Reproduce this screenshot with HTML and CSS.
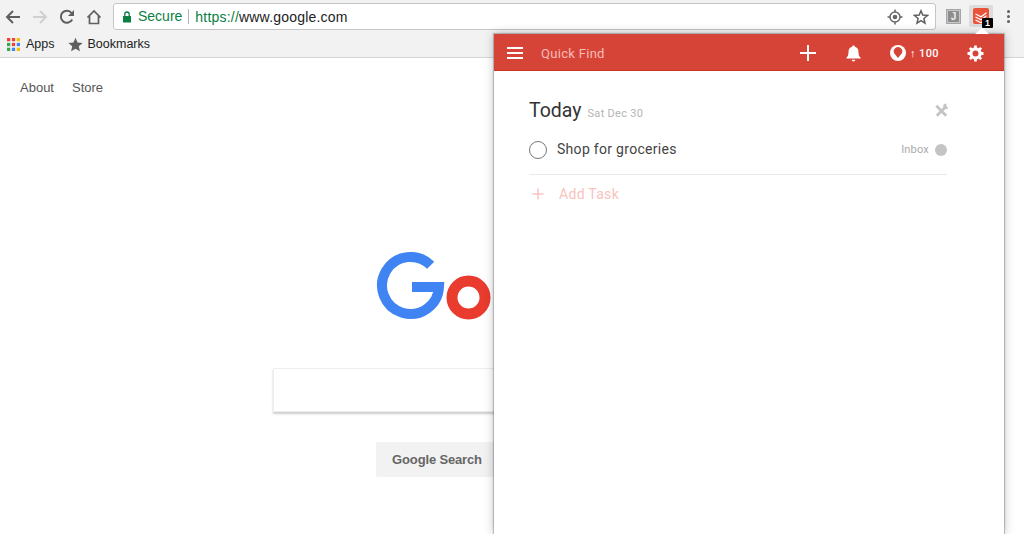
FILE: index.html
```html
<!DOCTYPE html>
<html lang="en">

<head>
    <meta charset="UTF-8">
    <title>Google</title>
    <link rel="stylesheet" href="styles.css">
</head>

<body>
    <header class="browser">
        <div class="toolbar">
            <button class="nav-btn">
                <svg viewBox="0 0 16 16" width="16" height="16"><path d="M15 8H2.500M8 2 2 8l6 6" fill="none" stroke="#5f5f5f" stroke-width="2"/></svg>
            </button>
            <button class="nav-btn">
                <svg viewBox="0 0 16 16" width="16" height="16"><path d="M1 8h12.500M8 2l6 6-6 6" fill="none" stroke="#d0d0d0" stroke-width="2"/></svg>
            </button>
            <button class="nav-btn">
                <svg viewBox="0 0 16 16" width="16" height="16"><path d="M13.200 10.500A6 6 0 1 1 12.600 4" fill="none" stroke="#5f5f5f" stroke-width="2"/><path d="M15 1v6H9z" fill="#5f5f5f"/></svg>
            </button>
            <button class="nav-btn">
                <svg viewBox="0 0 16 16" width="16" height="16"><path d="M1.500 8.500 8 2l6.500 6.500M3.500 7v7.500h9V7" fill="none" stroke="#5f5f5f" stroke-width="1.700"/></svg>
            </button>
            <div class="omnibox">
                <svg class="lock" viewBox="0 0 10 12" width="10" height="12"><path d="M1 5h8v6.500H1z" fill="#0b8043"/><path d="M2.800 5V3.200a2.200 2.200 0 0 1 4.400 0V5" fill="none" stroke="#0b8043" stroke-width="1.300"/></svg>
                <span class="secure">Secure</span>
                <span class="url"><span class="url-scheme">https://</span>www.google.com</span>
                <svg class="omni-icon" viewBox="0 0 16 16" width="16" height="16"><circle cx="8" cy="8" r="5" fill="none" stroke="#666" stroke-width="1.500"/><circle cx="8" cy="8" r="2.300" fill="#666"/><path d="M8 .5v2.500M8 13v2.500M.5 8H3M13 8h2.500" stroke="#666" stroke-width="1.500"/></svg>
                <svg class="omni-icon" viewBox="0 0 16 16" width="16" height="16"><path d="m8 1.800 1.800 4.300 4.700.4-3.600 3 1.100 4.600L8 11.700l-4 2.400 1.100-4.600-3.600-3 4.700-.4z" fill="none" stroke="#5f5f5f" stroke-width="1.500"/></svg>
            </div>
            <div class="ext ext-j"><span>J</span></div>
            <div class="ext ext-todoist">
                <svg viewBox="0 0 16 16" width="16" height="16"><rect width="16" height="16" rx="2" fill="#e8533a"/><path d="M2.500 6 8 8.800l5.500-4M2.500 9 8 11.800l5.500-4M2.500 12 8 14.800l5.500-4" fill="none" stroke="#fff" stroke-width="1.200"/></svg>
                <span class="ext-badge">1</span>
            </div>
            <div class="menu-dots"><i></i><i></i><i></i></div>
        </div>
        <div class="bookmarks">
            <svg class="apps-icon" viewBox="0 0 12 12" width="13" height="13">
                <rect width="3" height="3" fill="#ea4335"/><rect x="4.500" width="3" height="3" fill="#ea4335"/><rect x="9" width="3" height="3" fill="#fbbc05"/>
                <rect y="4.500" width="3" height="3" fill="#34a853"/><rect x="4.500" y="4.500" width="3" height="3" fill="#ea4335"/><rect x="9" y="4.500" width="3" height="3" fill="#4285f4"/>
                <rect y="9" width="3" height="3" fill="#34a853"/><rect x="4.500" y="9" width="3" height="3" fill="#4285f4"/><rect x="9" y="9" width="3" height="3" fill="#fbbc05"/>
            </svg>
            <span class="bm-label bm-apps">Apps</span>
            <svg class="bm-star" viewBox="0 0 16 16" width="15" height="15"><path d="m8 .8 2.200 5 5.400.5-4.100 3.600 1.200 5.300L8 12.400l-4.700 2.800 1.200-5.300L.4 6.300l5.400-.5z" fill="#5f5f5f"/></svg>
            <span class="bm-label">Bookmarks</span>
        </div>
    </header>

    <main class="page">
        <nav class="page-nav">
            <a>About</a>
            <a>Store</a>
        </nav>
        <div class="search">
            <svg class="logo" viewBox="0 0 272 92" width="272" height="92" role="img" aria-label="Google">
                <path d="M54.700 14.300A28.500 28.500 0 1 0 63 36H36" fill="none" stroke="#4083f3" stroke-width="10"/>
                <circle cx="92.500" cy="46.500" r="16.500" fill="none" stroke="#e93b2e" stroke-width="11"/>
            </svg>
            <div class="search-box"></div>
            <div class="search-btns">
                <button class="search-btn">Google Search</button>
                <button class="search-btn search-btn-lucky">I'm Feeling Lucky</button>
            </div>
        </div>
    </main>

    <!-- extension popup sits over the page -->
    <section class="popup">
        <span class="popup-caret"></span>
        <div class="popup-head">
            <div class="burger"><i></i><i></i><i></i></div>
            <span class="quick-find">Quick Find</span>
            <svg class="head-plus" viewBox="0 0 16 16" width="16" height="16"><path d="M8 0v16M0 8h16" stroke="#fff" stroke-width="2"/></svg>
            <svg class="head-bell" viewBox="0 0 16 16" width="17" height="17"><path d="M8 0.500c-.8 0-1.300.5-1.300 1.200C4.500 2.300 3.300 4 3.300 6.500c0 3-.8 4.300-2 5.500v.8h13.400V12c-1.200-1.200-2-2.500-2-5.500 0-2.500-1.200-4.200-3.400-4.800C9.300 1 8.800.5 8 .5zM6.300 13.800a1.700 1.700 0 0 0 3.400 0z" fill="#fff"/></svg>
            <svg class="head-karma" viewBox="0 0 16 16" width="16" height="16"><circle cx="8" cy="8" r="8" fill="#fff"/><path d="M8 13 4.700 9A4.200 4.200 0 1 1 11.300 9z" fill="#d64438"/></svg>
            <span class="karma-count">↑ 100</span>
            <svg class="head-gear" viewBox="0 0 16 16" width="17" height="17"><circle cx="8" cy="8" r="4.300" fill="none" stroke="#fff" stroke-width="3"/><path d="M8 .5v15M.5 8h15M2.700 2.700l10.600 10.600M13.300 2.700 2.700 13.300" stroke="#fff" stroke-width="2.600" stroke-dasharray="3 9"/></svg>
        </div>
        <div class="popup-body">
            <div class="day-head">
                <h2>Today</h2>
                <small>Sat Dec 30</small>
                <svg class="tools" viewBox="0 0 16 16" width="15" height="15"><path d="M2.500 3 13 13.500M13 3.500 3 13.500" fill="none" stroke="#c4c4c4" stroke-width="3"/><path d="M9.800 3.500a3.200 3.200 0 0 0 5.700 1.600L13.500 4l-.5-3.500a3.200 3.200 0 0 0-3.200 3z" fill="#c4c4c4"/></svg>
            </div>
            <div class="task">
                <span class="task-check"></span>
                <span class="task-name">Shop for groceries</span>
                <span class="task-project">Inbox</span>
                <span class="task-dot"></span>
            </div>
            <div class="add-task">
                <svg viewBox="0 0 12 12" width="12" height="12"><path d="M6 .5v11M.5 6h11" stroke="#f8c3be" stroke-width="1.500"/></svg>
                <span>Add Task</span>
            </div>
        </div>
    </section>
</body>

</html>
```

FILE: styles.css
```css
* {
    padding: 0;
    margin: 0;
    box-sizing: border-box;
}

html,
body {
    height: 100%;
    overflow: hidden;
}

body {
    background-color: white;
    font-family: "Liberation Sans", Arial, sans-serif;
    position: relative;
}

button {
    border: none;
    background: none;
    font-family: inherit;
}

/* browser chrome */
.browser {
    height: 58px;
    background-color: #f2f2f2;
    border-bottom: 1px solid #d6d6d6;
}

.toolbar {
    height: 34px;
    padding: 3px 0 0 0;
    display: flex;
    align-items: flex-start;
}

.nav-btn {
    width: 27px;
    height: 27px;
    display: flex;
    align-items: center;
    justify-content: center;
}

.nav-btn:first-child {
    width: 26px;
}

.omnibox {
    width: 823px;
    height: 27px;
    margin-left: 6px;
    padding: 0 6px 0 8px;
    display: flex;
    align-items: center;
    background-color: white;
    border: 1px solid #c6c6c6;
    border-radius: 3px;
}

.secure {
    margin-left: 6px;
    padding-right: 6px;
    border-right: 1px solid #b5b5b5;
    font-size: 14px;
    line-height: 15px;
    color: #0b8043;
}

.url {
    flex: 1;
    margin-left: 6px;
    font-size: 14px;
    letter-spacing: 0.2px;
    color: #222;
}

.url-scheme {
    color: #0b8043;
}

.omni-icon {
    margin-left: 10px;
}

.ext {
    height: 22px;
    margin-top: 2px;
    display: flex;
    align-items: center;
    justify-content: center;
    position: relative;
}

.ext-j {
    width: 15px;
    margin-left: 10px;
}

.ext-j span {
    width: 15px;
    height: 15px;
    background-color: #8d8d8d;
    border: 2px solid #c8c8c8;
    outline: 1px solid #a5a5a5;
    outline-offset: -1px;
    color: #eee;
    font-size: 10px;
    font-weight: bold;
    line-height: 11px;
    text-align: center;
}

.ext-todoist {
    width: 24px;
    margin-left: 8px;
    background-color: #dcdcdc;
    border-radius: 2px;
}

.ext-badge {
    position: absolute;
    left: 13px;
    top: 13px;
    width: 11px;
    height: 10px;
    background-color: black;
    border-radius: 1px;
    color: white;
    font-size: 9px;
    font-weight: bold;
    line-height: 10px;
    text-align: center;
}

.menu-dots {
    margin-left: 14px;
    margin-top: 7px;
    display: flex;
    flex-direction: column;
    gap: 2px;
}

.menu-dots i {
    width: 3px;
    height: 3px;
    background-color: #5f5f5f;
    border-radius: 50%;
}

.bookmarks {
    height: 20px;
    padding-left: 7px;
    display: flex;
    align-items: center;
}

.bm-label {
    font-size: 12.5px;
    color: #222;
}

.apps-icon {
    margin-right: 6px;
}

.bm-apps {
    margin-right: 13px;
}

.bm-star {
    margin-right: 5px;
}

/* google page */
.page {
    height: 476px;
}

.page-nav {
    padding: 22px 0 0 20px;
    display: flex;
    gap: 18px;
    font-size: 13px;
    line-height: 15px;
    color: #555;
}

.search {
    display: flex;
    flex-direction: column;
    align-items: center;
}

.logo {
    margin-top: 156px;
}

.search-box {
    width: 478px;
    height: 44px;
    margin-top: 25px;
    border: 1px solid #eee;
    box-shadow: 0 2px 2px rgba(0, 0, 0, 0.2);
}

.search-btns {
    margin-top: 30px;
    display: flex;
    gap: 8px;
}

.search-btn {
    width: 122px;
    height: 35px;
    background-color: #f2f2f2;
    border-radius: 2px;
    color: #666;
    font-size: 13px;
    font-weight: bold;
    letter-spacing: -0.15px;
}

.search-btn-lucky {
    width: 142px;
}

/* todoist popup */
.popup {
    position: absolute;
    left: 494px;
    top: 34px;
    width: 510px;
    height: 500px;
    background-color: white;
    box-shadow: 0 0 1px 1px rgba(0, 0, 0, 0.2), 0 0 10px rgba(0, 0, 0, 0.25);
    font-family: Roboto, "Liberation Sans", sans-serif;
}

.popup-caret {
    position: absolute;
    left: 481px;
    top: -6px;
    border-left: 7px solid transparent;
    border-right: 7px solid transparent;
    border-bottom: 6px solid white;
}

.popup-head {
    height: 37px;
    padding: 2px 20px 0 13px;
    display: flex;
    align-items: center;
    background-color: #d64438;
    border-bottom: 1px solid #c9321f;
    color: white;
}

.burger {
    width: 16px;
    display: flex;
    flex-direction: column;
    gap: 3px;
}

.burger i {
    height: 2px;
    background-color: white;
}

.quick-find {
    flex: 1;
    margin-left: 18px;
    font-size: 13px;
    letter-spacing: 0.3px;
    color: #f7bdb7;
}

.head-plus {
    margin-right: 29px;
}

.head-bell {
    margin-right: 28px;
}

.karma-count {
    margin-left: 4px;
    margin-right: 28px;
    font-size: 11px;
    font-weight: 500;
    letter-spacing: 0.4px;
}

.popup-body {
    padding: 28px 57px 0 35px;
}

.day-head {
    height: 27px;
    display: flex;
    align-items: baseline;
    color: #333;
}

.day-head h2 {
    font-size: 19.5px;
    font-weight: 400;
}

.day-head small {
    flex: 1;
    margin-left: 6px;
    font-size: 11px;
    letter-spacing: 0.3px;
    color: #b5b5b5;
}

.tools {
    align-self: flex-start;
    margin-top: 4px;
    margin-right: -2px;
}

.task {
    height: 49px;
    padding-bottom: 1px;
    display: flex;
    align-items: center;
    border-bottom: 1px solid #eaeaea;
}

.task-check {
    width: 18px;
    height: 18px;
    border: 1px solid #777;
    border-radius: 50%;
}

.task-name {
    flex: 1;
    margin-left: 10px;
    margin-bottom: 2px;
    font-size: 14px;
    letter-spacing: 0.3px;
    color: #444;
}

.task-project {
    font-size: 11px;
    letter-spacing: 0.2px;
    color: #aaa;
}

.task-dot {
    width: 12px;
    height: 12px;
    margin-left: 6px;
    background-color: #c4c4c4;
    border-radius: 50%;
}

.add-task {
    height: 38px;
    padding-left: 3px;
    display: flex;
    align-items: center;
    gap: 15px;
    font-size: 14px;
    letter-spacing: 0.3px;
    color: #f8c3be;
}
```
